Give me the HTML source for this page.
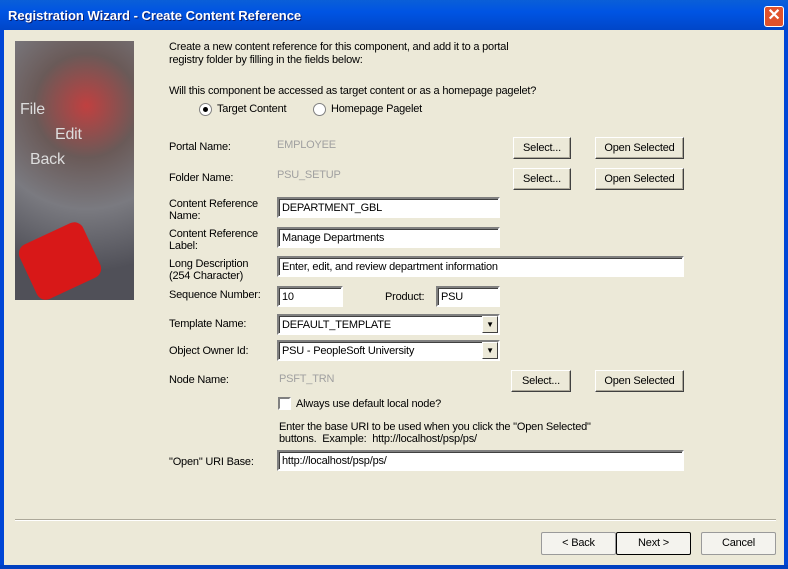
<!DOCTYPE html>
<html><head><style>
*{margin:0;padding:0;box-sizing:border-box}
body{width:788px;height:569px;overflow:hidden;background:#ece9d8;font-family:"Liberation Sans",Tahoma,sans-serif;font-size:11px;letter-spacing:-0.2px;color:#000;position:relative}
.a{position:absolute;white-space:nowrap}
.title{left:0;top:0;width:788px;height:30px;background:linear-gradient(#0a5fd8,#0054e3 40%,#0046c8);}
.bl{left:0;top:30px;width:4px;height:539px;background:#0046d6}
.br{right:0;top:30px;width:4px;height:539px;background:#0046d6}
.bb{left:0;bottom:0;width:788px;height:4px;background:#0040c0}
.tt{left:8px;top:8px;color:#fff;font-weight:bold;font-size:13px;letter-spacing:0;text-shadow:1px 1px #0a1e6e}
.close{left:764px;top:6px;width:20px;height:21px;background:#e0522c;border:1px solid #fff;border-radius:3px;color:#fff;font-weight:bold;font-size:16px;text-align:center;line-height:18px}
.btn{background:#ece9d8;border:1px solid;border-color:#fff #404040 #404040 #fff;box-shadow:inset -1px -1px #aca899;text-align:center;height:22px;line-height:20px}
.xb{background:#f4f3ee;border:1px solid #9a9a9a;border-radius:2px;text-align:center;height:23px;line-height:21px}
.in{background:#fff;border:2px solid;border-color:#808080 #fff #fff #808080;box-shadow:inset 1px 1px #404040;height:21px;padding:2px 3px;line-height:14px}
.g{color:#a0a0a0}
.dd{position:absolute;right:0;top:0;width:16px;height:17px;background:#ece9d8;border:1px solid;border-color:#fff #404040 #404040 #fff;text-align:center;font-size:8px;line-height:15px}
.rad{width:13px;height:13px;border:1px solid #808080;border-radius:50%;background:#fff}
</style></head><body>
<div class="a title"></div>
<div class="a tt">Registration Wizard - Create Content Reference</div>
<div class="a close">✕</div>
<div class="a bl"></div><div class="a br"></div><div class="a bb"></div>

<div class="a" style="left:15px;top:41px;width:119px;height:259px;background:radial-gradient(circle at 60% 25%,#c04040 0,#6a5a58 25%,#7a7a80 50%,#505058 80%);overflow:hidden">
<div class="a" style="left:10px;top:190px;width:70px;height:60px;background:#d81818;border-radius:10px;transform:rotate(-25deg)"></div>
<div class="a" style="left:5px;top:60px;color:#ddd;font-size:16px">File</div>
<div class="a" style="left:40px;top:85px;color:#ddd;font-size:16px">Edit</div>
<div class="a" style="left:15px;top:110px;color:#ddd;font-size:16px">Back</div>
</div>

<div class="a" style="left:169px;top:41px;line-height:13px">Create a new content reference for this component, and add it to a portal<br>registry folder by filling in the fields below:</div>
<div class="a" style="left:169px;top:85px">Will this component be accessed as target content or as a homepage pagelet?</div>
<div class="a rad" style="left:199px;top:103px"><div style="width:5px;height:5px;background:#000;border-radius:50%;margin:3px"></div></div>
<div class="a" style="left:217px;top:103px">Target Content</div>
<div class="a rad" style="left:313px;top:103px"></div>
<div class="a" style="left:331px;top:103px">Homepage Pagelet</div>

<div class="a" style="left:169px;top:141px">Portal Name:</div>
<div class="a g" style="left:277px;top:139px">EMPLOYEE</div>
<div class="a btn" style="left:513px;top:137px;width:58px">Select...</div>
<div class="a btn" style="left:595px;top:137px;width:89px">Open Selected</div>

<div class="a" style="left:169px;top:172px">Folder Name:</div>
<div class="a g" style="left:277px;top:169px">PSU_SETUP</div>
<div class="a btn" style="left:513px;top:168px;width:58px">Select...</div>
<div class="a btn" style="left:595px;top:168px;width:89px">Open Selected</div>

<div class="a" style="left:169px;top:198px;line-height:12px">Content Reference<br>Name:</div>
<div class="a in" style="left:277px;top:197px;width:223px">DEPARTMENT_GBL</div>
<div class="a" style="left:169px;top:228px;line-height:12px">Content Reference<br>Label:</div>
<div class="a in" style="left:277px;top:227px;width:223px">Manage Departments</div>
<div class="a" style="left:169px;top:258px;line-height:12px">Long Description<br>(254 Character)</div>
<div class="a in" style="left:277px;top:256px;width:407px">Enter, edit, and review department information</div>

<div class="a" style="left:169px;top:289px">Sequence Number:</div>
<div class="a in" style="left:277px;top:286px;width:66px">10</div>
<div class="a" style="left:385px;top:291px">Product:</div>
<div class="a in" style="left:436px;top:286px;width:64px">PSU</div>

<div class="a" style="left:169px;top:318px">Template Name:</div>
<div class="a in" style="left:277px;top:314px;width:223px">DEFAULT_TEMPLATE<div class="dd">▼</div></div>
<div class="a" style="left:169px;top:345px">Object Owner Id:</div>
<div class="a in" style="left:277px;top:340px;width:223px">PSU - PeopleSoft University<div class="dd">▼</div></div>

<div class="a" style="left:169px;top:374px">Node Name:</div>
<div class="a g" style="left:279px;top:373px">PSFT_TRN</div>
<div class="a btn" style="left:511px;top:370px;width:60px">Select...</div>
<div class="a btn" style="left:595px;top:370px;width:89px">Open Selected</div>

<div class="a" style="left:278px;top:397px;width:13px;height:13px;border:2px solid;border-color:#808080 #fff #fff #808080;background:#fff"></div>
<div class="a" style="left:296px;top:398px">Always use default local node?</div>

<div class="a" style="left:279px;top:421px;line-height:12px">Enter the base URI to be used when you click the "Open Selected"<br>buttons.&nbsp; Example:&nbsp; http://localhost/psp/ps/</div>
<div class="a" style="left:169px;top:456px">"Open" URI Base:</div>
<div class="a in" style="left:277px;top:450px;width:407px">http://localhost/psp/ps/</div>

<div class="a" style="left:15px;top:519px;width:761px;height:2px;border-top:1px solid #aca899;border-bottom:1px solid #fff"></div>
<div class="a xb" style="left:541px;top:532px;width:75px">&lt; Back</div>
<div class="a xb" style="left:616px;top:532px;width:75px;border-color:#000">Next &gt;</div>
<div class="a xb" style="left:701px;top:532px;width:75px">Cancel</div>
</body></html>
